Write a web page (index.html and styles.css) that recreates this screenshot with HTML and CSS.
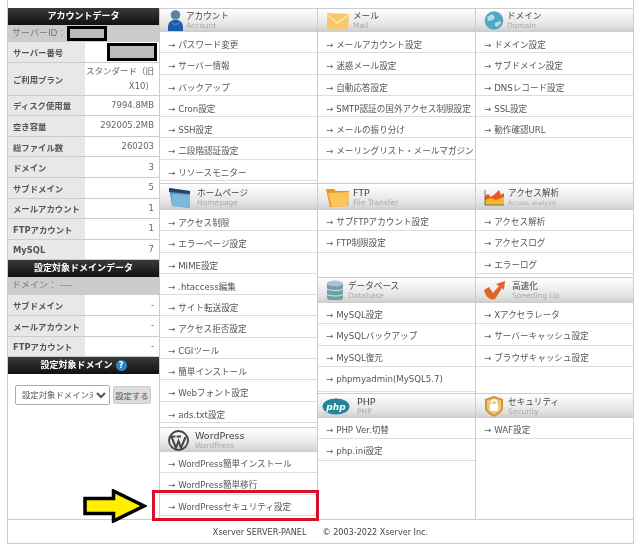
FILE: index.html
```html
<!DOCTYPE html>
<html lang="ja">
<head>
  <meta charset="UTF-8">
  <title>Xserver SERVER-PANEL</title>
  <link rel="stylesheet" href="styles.css">
</head>
<body>
  <div class="panel">
    <div class="main">
      <div class="side">
        <div class="side-head">アカウントデータ</div>
        <div class="side-note server-id">サーバーID：<span class="mask mask-id"></span></div>
        <div class="stat"><span class="key">サーバー番号</span><span class="val"><span class="mask mask-no"></span></span></div>
        <div class="stat plan"><span class="key">ご利用プラン</span><span class="val">スタンダード（旧X10）</span></div>
        <div class="stat"><span class="key">ディスク使用量</span><span class="val">7994.8MB</span></div>
        <div class="stat"><span class="key">空き容量</span><span class="val">292005.2MB</span></div>
        <div class="stat"><span class="key">総ファイル数</span><span class="val">260203</span></div>
        <div class="stat"><span class="key">ドメイン</span><span class="val">3</span></div>
        <div class="stat"><span class="key">サブドメイン</span><span class="val">5</span></div>
        <div class="stat"><span class="key">メールアカウント</span><span class="val">1</span></div>
        <div class="stat"><span class="key">FTPアカウント</span><span class="val">1</span></div>
        <div class="stat"><span class="key">MySQL</span><span class="val">7</span></div>
        <div class="side-head">設定対象ドメインデータ</div>
        <div class="side-note">ドメイン： ----</div>
        <div class="stat"><span class="key">サブドメイン</span><span class="val">-</span></div>
        <div class="stat"><span class="key">メールアカウント</span><span class="val">-</span></div>
        <div class="stat"><span class="key">FTPアカウント</span><span class="val">-</span></div>
        <div class="side-head">設定対象ドメイン <span class="help">?</span></div>
        <form class="domain-form">
          <select class="domain-select"><option>設定対象ドメイン未選択</option></select>
          <button type="button" class="domain-btn">設定する</button>
        </form>
      </div>

      <div class="col">
        <div class="sec sec-top">
          <div class="sec-head">
            <svg width="15" height="21" viewBox="0 0 15 21"><circle cx="7.500" cy="5" r="4.800" fill="#64809c"/><path d="M0 21c-.6-9 2.500-11 7.500-11s8.100 2 7.500 11z" fill="#1c5ca6"/><path d="M3 12c1 3 8 3 9 0" fill="none" stroke="#5d9ad6"/></svg>
            <div><div class="ttl">アカウント</div><div class="sub">Account</div></div>
          </div>
          <a class="row">パスワード変更</a>
          <a class="row">サーバー情報</a>
          <a class="row">バックアップ</a>
          <a class="row">Cron設定</a>
          <a class="row">SSH設定</a>
          <a class="row">二段階認証設定</a>
          <a class="row">リソースモニター</a>
        </div>
        <div class="sec sec-mid sec-home">
          <div class="sec-head">
            <svg width="26" height="21" viewBox="0 0 26 21"><path d="M1 1l21 3v17L4 19z" fill="#5d9ccf"/><path d="M4 7l18 1v13L4 19z" fill="#7fb6de"/><path d="M1 1l21 3v3L1 5z" fill="#2b4258"/></svg>
            <div><div class="ttl">ホームページ</div><div class="sub">Homepage</div></div>
          </div>
          <a class="row">アクセス制限</a>
          <a class="row">エラーページ設定</a>
          <a class="row">MIME設定</a>
          <a class="row">.htaccess編集</a>
          <a class="row">サイト転送設定</a>
          <a class="row">アクセス拒否設定</a>
          <a class="row">CGIツール</a>
          <a class="row">簡単インストール</a>
          <a class="row">Webフォント設定</a>
          <a class="row">ads.txt設定</a>
        </div>
        <div class="sec">
          <div class="sec-head">
            <svg width="24" height="21" viewBox="0 0 24 21"><circle cx="10.500" cy="10.500" r="9.500" fill="none" stroke="#444" stroke-width="1.800"/><path d="M3.500 7l4.500 11 2.500-7 2.500 7 4.500-11M2.500 6.500h5M8.500 6.500h4.500" fill="none" stroke="#444" stroke-width="2"/></svg>
            <div><div class="ttl ttl-en">WordPress</div><div class="sub">WordPress</div></div>
          </div>
          <a class="row">WordPress簡単インストール</a>
          <a class="row">WordPress簡単移行</a>
          <a class="row">WordPressセキュリティ設定</a>
        </div>
      </div>

      <div class="col">
        <div class="sec sec-top">
          <div class="sec-head">
            <svg width="24" height="18" viewBox="0 0 24 18"><path d="M1 1l22 1-1 15-21 1z" fill="#f8c76c"/><path d="M1.500 3l10 8 11-8" fill="none" stroke="#fde6b4" stroke-width="1.500"/></svg>
            <div><div class="ttl">メール</div><div class="sub">Mail</div></div>
          </div>
          <a class="row">メールアカウント設定</a>
          <a class="row">迷惑メール設定</a>
          <a class="row">自動応答設定</a>
          <a class="row">SMTP認証の国外アクセス制限設定</a>
          <a class="row">メールの振り分け</a>
          <a class="row">メーリングリスト・メールマガジン</a>
        </div>
        <div class="sec sec-mid">
          <div class="sec-head">
            <svg width="24" height="20" viewBox="0 0 24 20"><path d="M0 2h8l2 2h13l-1 15-18 1z" fill="#e8961e"/><path d="M2 6l21-1-2 14-15 1z" fill="#fbc55a"/></svg>
            <div><div class="ttl ttl-en">FTP</div><div class="sub">File Transfer</div></div>
          </div>
          <a class="row">サブFTPアカウント設定</a>
          <a class="row">FTP制限設定</a>
        </div>
        <div class="sec sec-low">
          <div class="sec-head">
            <svg width="19" height="21" viewBox="0 0 19 21"><rect x="1" y="2" width="16" height="18" rx="3" fill="#6fa0a8"/><ellipse cx="9" cy="3.500" rx="8" ry="3" fill="#a6c8ca"/><path d="M1 9c3 2 13 2 16 0M1 14.500c3 2 13 2 16 0" fill="none" stroke="#dcebeb"/></svg>
            <div><div class="ttl">データベース</div><div class="sub">Database</div></div>
          </div>
          <a class="row">MySQL設定</a>
          <a class="row">MySQLバックアップ</a>
          <a class="row">MySQL復元</a>
          <a class="row row-tall">phpmyadmin(MySQL5.7)</a>
        </div>
        <div class="sec">
          <div class="sec-head">
            <svg class="ico-php" width="28" height="17" viewBox="0 0 28 17"><ellipse cx="14" cy="8.500" rx="13.500" ry="8" fill="#23859c"/><text x="14" y="11.500" text-anchor="middle" class="php-text">php</text></svg>
            <div><div class="ttl ttl-en">PHP</div><div class="sub">PHP</div></div>
          </div>
          <a class="row">PHP Ver.切替</a>
          <a class="row">php.ini設定</a>
        </div>
      </div>

      <div class="col col-last">
        <div class="sec sec-top">
          <div class="sec-head">
            <svg width="20" height="19" viewBox="0 0 20 19"><circle cx="10" cy="9.500" r="9.300" fill="#50a8c4"/><path d="M3 6l5-3 3 3-2 3-5 1zM11 12l5-2 1 2-4 4-2-1z" fill="#b9dde8"/></svg>
            <div><div class="ttl">ドメイン</div><div class="sub">Domain</div></div>
          </div>
          <a class="row">ドメイン設定</a>
          <a class="row">サブドメイン設定</a>
          <a class="row">DNSレコード設定</a>
          <a class="row">SSL設定</a>
          <a class="row">動作確認URL</a>
        </div>
        <div class="sec sec-mid">
          <div class="sec-head">
            <svg width="21" height="18" viewBox="0 0 21 18"><path d="M1 17V8l3-2 3 3 4-3 4-4 2 5 3-2v12z" fill="#e85a20"/><path d="M1 17v-5l6-2 5 2 8-3v8z" fill="#f5b92e"/><path d="M1 2v15h19" fill="none" stroke="#555" stroke-width=".8"/></svg>
            <div><div class="ttl">アクセス解析</div><div class="sub sub-small">Access analysis</div></div>
          </div>
          <a class="row">アクセス解析</a>
          <a class="row">アクセスログ</a>
          <a class="row">エラーログ</a>
        </div>
        <div class="sec sec-low">
          <div class="sec-head">
            <svg width="25" height="21" viewBox="0 0 25 21"><path d="M0 10l5-3 4 6 6-7-3-2 9-3-1 9-2-2-7 11c-5 2-10-3-11-9z" fill="#dd6526"/></svg>
            <div><div class="ttl">高速化</div><div class="sub">Speeding Up</div></div>
          </div>
          <a class="row">Xアクセラレータ</a>
          <a class="row">サーバーキャッシュ設定</a>
          <a class="row">ブラウザキャッシュ設定</a>
        </div>
        <div class="sec">
          <div class="sec-head">
            <svg width="21" height="21" viewBox="0 0 21 21"><path d="M10 0l9 3v9c0 4-5 7-9 9-4-2-9-5-9-9V3z" fill="#c9983a"/><path d="M10 2l7 2.500V12c0 3-4 5-7 6.500C7 17 3 15 3 12V4.500z" fill="#ecc877"/><rect x="6" y="8" width="8" height="7" rx="1" fill="#fff"/><path d="M7.500 8V6.500a2.500 2.500 0 0 1 5 0V8" fill="none" stroke="#fff" stroke-width="1.300"/></svg>
            <div><div class="ttl">セキュリティ</div><div class="sub">Security</div></div>
          </div>
          <a class="row">WAF設定</a>
        </div>
      </div>
    </div>
    <div class="foot"><span>Xserver SERVER-PANEL</span><span>© 2003-2022 Xserver Inc.</span></div>
  </div>

  <div class="red-box"></div>
  <svg class="arrow" viewBox="0 0 64 34"><path d="M2 9.500h28.500V2L61 17 30.500 32v-7.500H2z" fill="#ffee00" stroke="#000" stroke-width="3.500"/></svg>
</body>
</html>
```

FILE: styles.css
```css
* {
  box-sizing: border-box;
}
body {
  margin: 0;
  width: 640px;
  height: 554px;
  overflow: hidden;
  background-color: #fff;
  color: #555;
  font-family: "DejaVu Sans", "Noto Sans CJK JP", sans-serif;
  font-size: 9px;
  position: relative;
  filter: blur(0.35px);
}
.panel {
  width: 627px;
  height: 544px;
  margin-left: 7px;
  border-left: 1px solid #ccc;
  border-right: 1px solid #ccc;
  border-bottom: 1px solid #ccc;
  padding-top: 8px;
  display: flex;
  flex-direction: column;
}
.main {
  display: flex;
  height: 511px;
}
.foot {
  height: 24px;
  border-top: 1px solid #ccc;
  display: flex;
  justify-content: center;
  align-items: center;
  gap: 16px;
  color: #444;
  font-size: 8.100px;
}
.side {
  width: 151px;
  flex: none;
}
.side-head {
  height: 17px;
  background: linear-gradient(#3a3a3a, #111);
  color: #fff;
  font-size: 9px;
  font-weight: bold;
  text-align: center;
  line-height: 17px;
}
.side-note {
  height: 18px;
  background-color: #ccc;
  color: #777;
  font-size: 9px;
  line-height: 17px;
  padding-left: 4px;
}
.server-id {
  height: 17px;
}
.stat {
  display: flex;
  height: 20.600px;
  border-bottom: 1px solid #ccc;
}
.plan {
  height: 33px;
}
.key {
  width: 77px;
  background-color: #e8e8e8;
  color: #555;
  padding-left: 5px;
  font-size: 8.400px;
  font-weight: bold;
  display: flex;
  align-items: center;
  flex: none;
  white-space: nowrap;
}
.val {
  flex: 1;
  padding-right: 5px;
  text-align: right;
  font-size: 8.500px;
  color: #666;
  align-self: center;
  line-height: 15px;
}
.mask {
  display: inline-block;
  background-color: #bbb;
  border: 3px solid #000;
  vertical-align: middle;
}
.mask-id {
  width: 40px;
  height: 15px;
}
.mask-no {
  width: 50px;
  height: 18px;
  margin-right: -3px;
}
.help {
  display: inline-block;
  width: 11px;
  height: 11px;
  line-height: 11px;
  border-radius: 50%;
  background-color: #2a86c8;
  font-size: 8px;
}
.domain-form {
  display: flex;
  align-items: center;
  gap: 3px;
  padding: 11px 0 0 7px;
}
.domain-select {
  width: 95px;
  height: 20px;
  padding-left: 2px;
  font-family: inherit;
  font-size: 8.400px;
  color: #555;
  background-color: #fff;
  border: 1px solid #aaa;
  border-radius: 2px;
}
.domain-btn {
  width: 38px;
  height: 18px;
  padding: 0;
  font-family: inherit;
  font-size: 8.400px;
  color: #555;
  background-color: #ddd;
  border: 1px solid #ccc;
  border-radius: 2px;
  white-space: nowrap;
}
.col {
  width: 158px;
  flex: none;
  border-left: 1px solid #ccc;
}
.col-last {
  flex: 1;
}
.sec-top {
  height: 175px;
}
.sec-mid {
  height: 94px;
}
.sec-home {
  height: 244px;
}
.sec-low {
  height: 116px;
}
.sec-head {
  height: 25px;
  background: linear-gradient(#fff, #e4e4e4 70%, #ccc);
  border-top: 1px solid #ccc;
  display: flex;
  align-items: center;
  gap: 3px;
  padding-left: 8px;
}
.sec-top .sec-head {
  height: 24px;
}
.sec-mid .sec-head {
  height: 27px;
}
.sec-low .sec-head {
  height: 26px;
}
.sec-head svg {
  flex: none;
}
.ico-php {
  margin: 0 4px 0 -4px;
}
.php-text {
  font-family: "DejaVu Sans", sans-serif;
  font-size: 9px;
  font-style: italic;
  font-weight: bold;
  fill: #fff;
}
.ttl {
  font-size: 8.600px;
  line-height: 10px;
  color: #444;
}
.ttl-en {
  font-size: 9.500px;
}
.sub {
  font-size: 7.500px;
  line-height: 9px;
  color: #aaa;
}
.sub-small {
  font-size: 6.200px;
}
.row {
  display: block;
  height: 21.300px;
  line-height: 21px;
  border-bottom: 1px solid #ddd;
  padding: 2px 0 0 8px;
  font-size: 8.600px;
  color: #555;
  white-space: nowrap;
}
.sec-top .row, .sec-home .row {
  padding-top: 3px;
  line-height: 20.500px;
}
.row::before {
  content: "→";
  color: #3c6f60;
  margin-right: 3px;
}
.row-tall {
  height: 25px;
}
.red-box {
  position: absolute;
  left: 152px;
  top: 490px;
  width: 167px;
  height: 31px;
  border: 3px solid #d9102c;
}
.arrow {
  position: absolute;
  left: 83px;
  top: 489px;
  width: 64px;
  height: 34px;
}
```
